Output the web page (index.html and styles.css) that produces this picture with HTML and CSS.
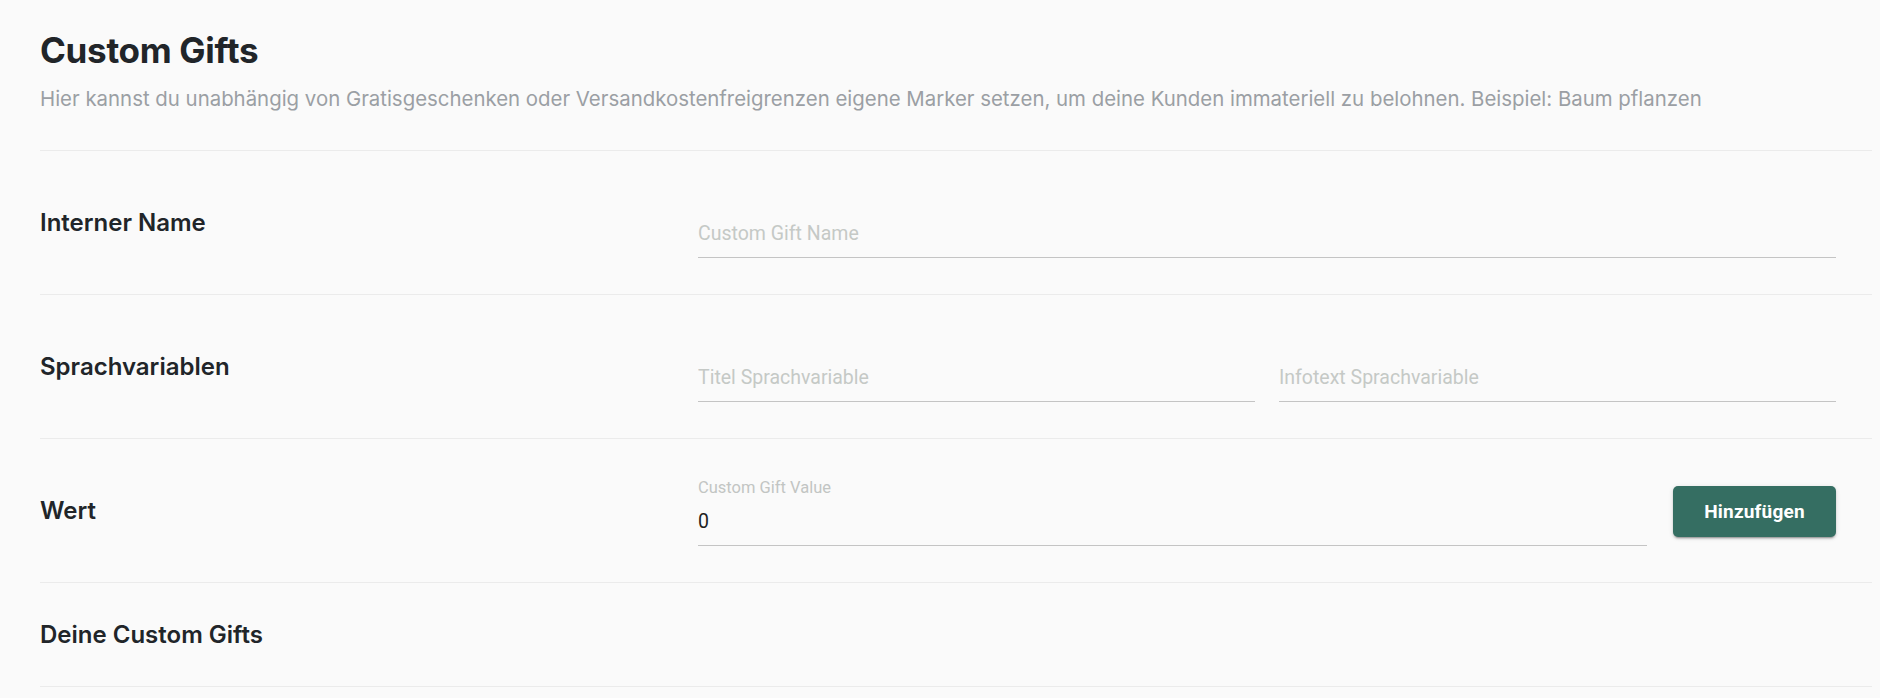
FILE: index.html
```html
<!DOCTYPE html>
<html lang="de">
<head>
<meta charset="utf-8">
<title>Custom Gifts</title>
<link rel="stylesheet" href="styles.css">
</head>
<body>
<main class="page">
  <header class="header">
    <h1 class="title">Custom Gifts</h1>
    <p class="subtitle">Hier kannst du unabhängig von Gratisgeschenken oder Versandkostenfreigrenzen eigene Marker setzen, um deine Kunden immateriell zu belohnen. Beispiel: Baum pflanzen</p>
  </header>

  <section class="row">
    <div class="row-label">Interner Name</div>
    <div class="row-fields">
      <label class="field">
        <span class="field-label"></span>
        <input class="field-input" type="text" placeholder="Custom Gift Name">
      </label>
    </div>
  </section>

  <section class="row">
    <div class="row-label">Sprachvariablen</div>
    <div class="row-fields">
      <label class="field">
        <span class="field-label"></span>
        <input class="field-input" type="text" placeholder="Titel Sprachvariable">
      </label>
      <label class="field">
        <span class="field-label"></span>
        <input class="field-input" type="text" placeholder="Infotext Sprachvariable">
      </label>
    </div>
  </section>

  <section class="row">
    <div class="row-label">Wert</div>
    <div class="row-fields with-button">
      <label class="field">
        <span class="field-label">Custom Gift Value</span>
        <input class="field-input" type="text" value="0">
      </label>
      <button class="btn" type="button">Hinzufügen</button>
    </div>
  </section>

  <section class="row row-heading">
    <div class="row-label">Deine Custom Gifts</div>
  </section>
</main>
</body>
</html>
```

FILE: styles.css
```css
* { box-sizing: border-box; }

html, body {
  margin: 0;
  padding: 0;
  background: #fafafa;
}

body {
  font-family: Inter, "Noto Sans", sans-serif;
  color: #212529;
}

.page {
  padding: 0 8px 0 40px;
}

.header {
  padding-top: 30px;
  padding-bottom: 37px;
  border-bottom: 1px solid #ebebeb;
}

.title {
  margin: 0;
  font-size: 35px;
  line-height: 40px;
  font-weight: 700;
  letter-spacing: -0.3px;
  color: #212529;
}

.subtitle {
  margin: 15px 0 0;
  font-size: 20.4px;
  line-height: 28px;
  font-weight: 400;
  color: #9b9fa4;
}

.row {
  display: grid;
  grid-template-columns: 658px 1fr;
  align-items: center;
  padding: 40px 36px 36px 0;
  border-bottom: 1px solid #ebebeb;
}

.row-label {
  font-size: 24px;
  line-height: 28px;
  font-weight: 600;
  color: #212529;
  margin-bottom: 3px;
}

.row-fields {
  display: flex;
  gap: 24px;
  align-items: center;
}

.with-button {
  gap: 26px;
}

.field {
  flex: 1;
  display: flex;
  flex-direction: column;
  min-width: 0;
}

.field-label {
  height: 18px;
  font-family: Roboto, "Liberation Sans", sans-serif;
  font-size: 16.5px;
  line-height: 18px;
  color: #c2c5c3;
}

.field-input {
  width: 100%;
  height: 49px;
  margin: 0;
  padding: 0;
  border: 0;
  border-bottom: 1px solid #c4c4c4;
  background: transparent;
  outline: none;
  font-family: Roboto, "Liberation Sans", sans-serif;
  font-size: 19.5px;
  color: #1f1f1f;
}

.field-input::placeholder {
  color: #c5c9c6;
  opacity: 1;
}

.btn {
  flex: none;
  width: 163px;
  height: 51px;
  margin-bottom: 3px;
  border: 0;
  border-radius: 5px;
  background: #356e62;
  color: #ffffff;
  font-family: Roboto, "Liberation Sans", sans-serif;
  font-size: 19px;
  font-weight: 700;
  letter-spacing: 0.2px;
  box-shadow: 0 3px 1px -2px rgba(0,0,0,0.2), 0 2px 2px 0 rgba(0,0,0,0.14), 0 1px 5px 0 rgba(0,0,0,0.12);
  cursor: pointer;
}

.row-heading {
  padding: 38px 0 34px 0;
}
```
